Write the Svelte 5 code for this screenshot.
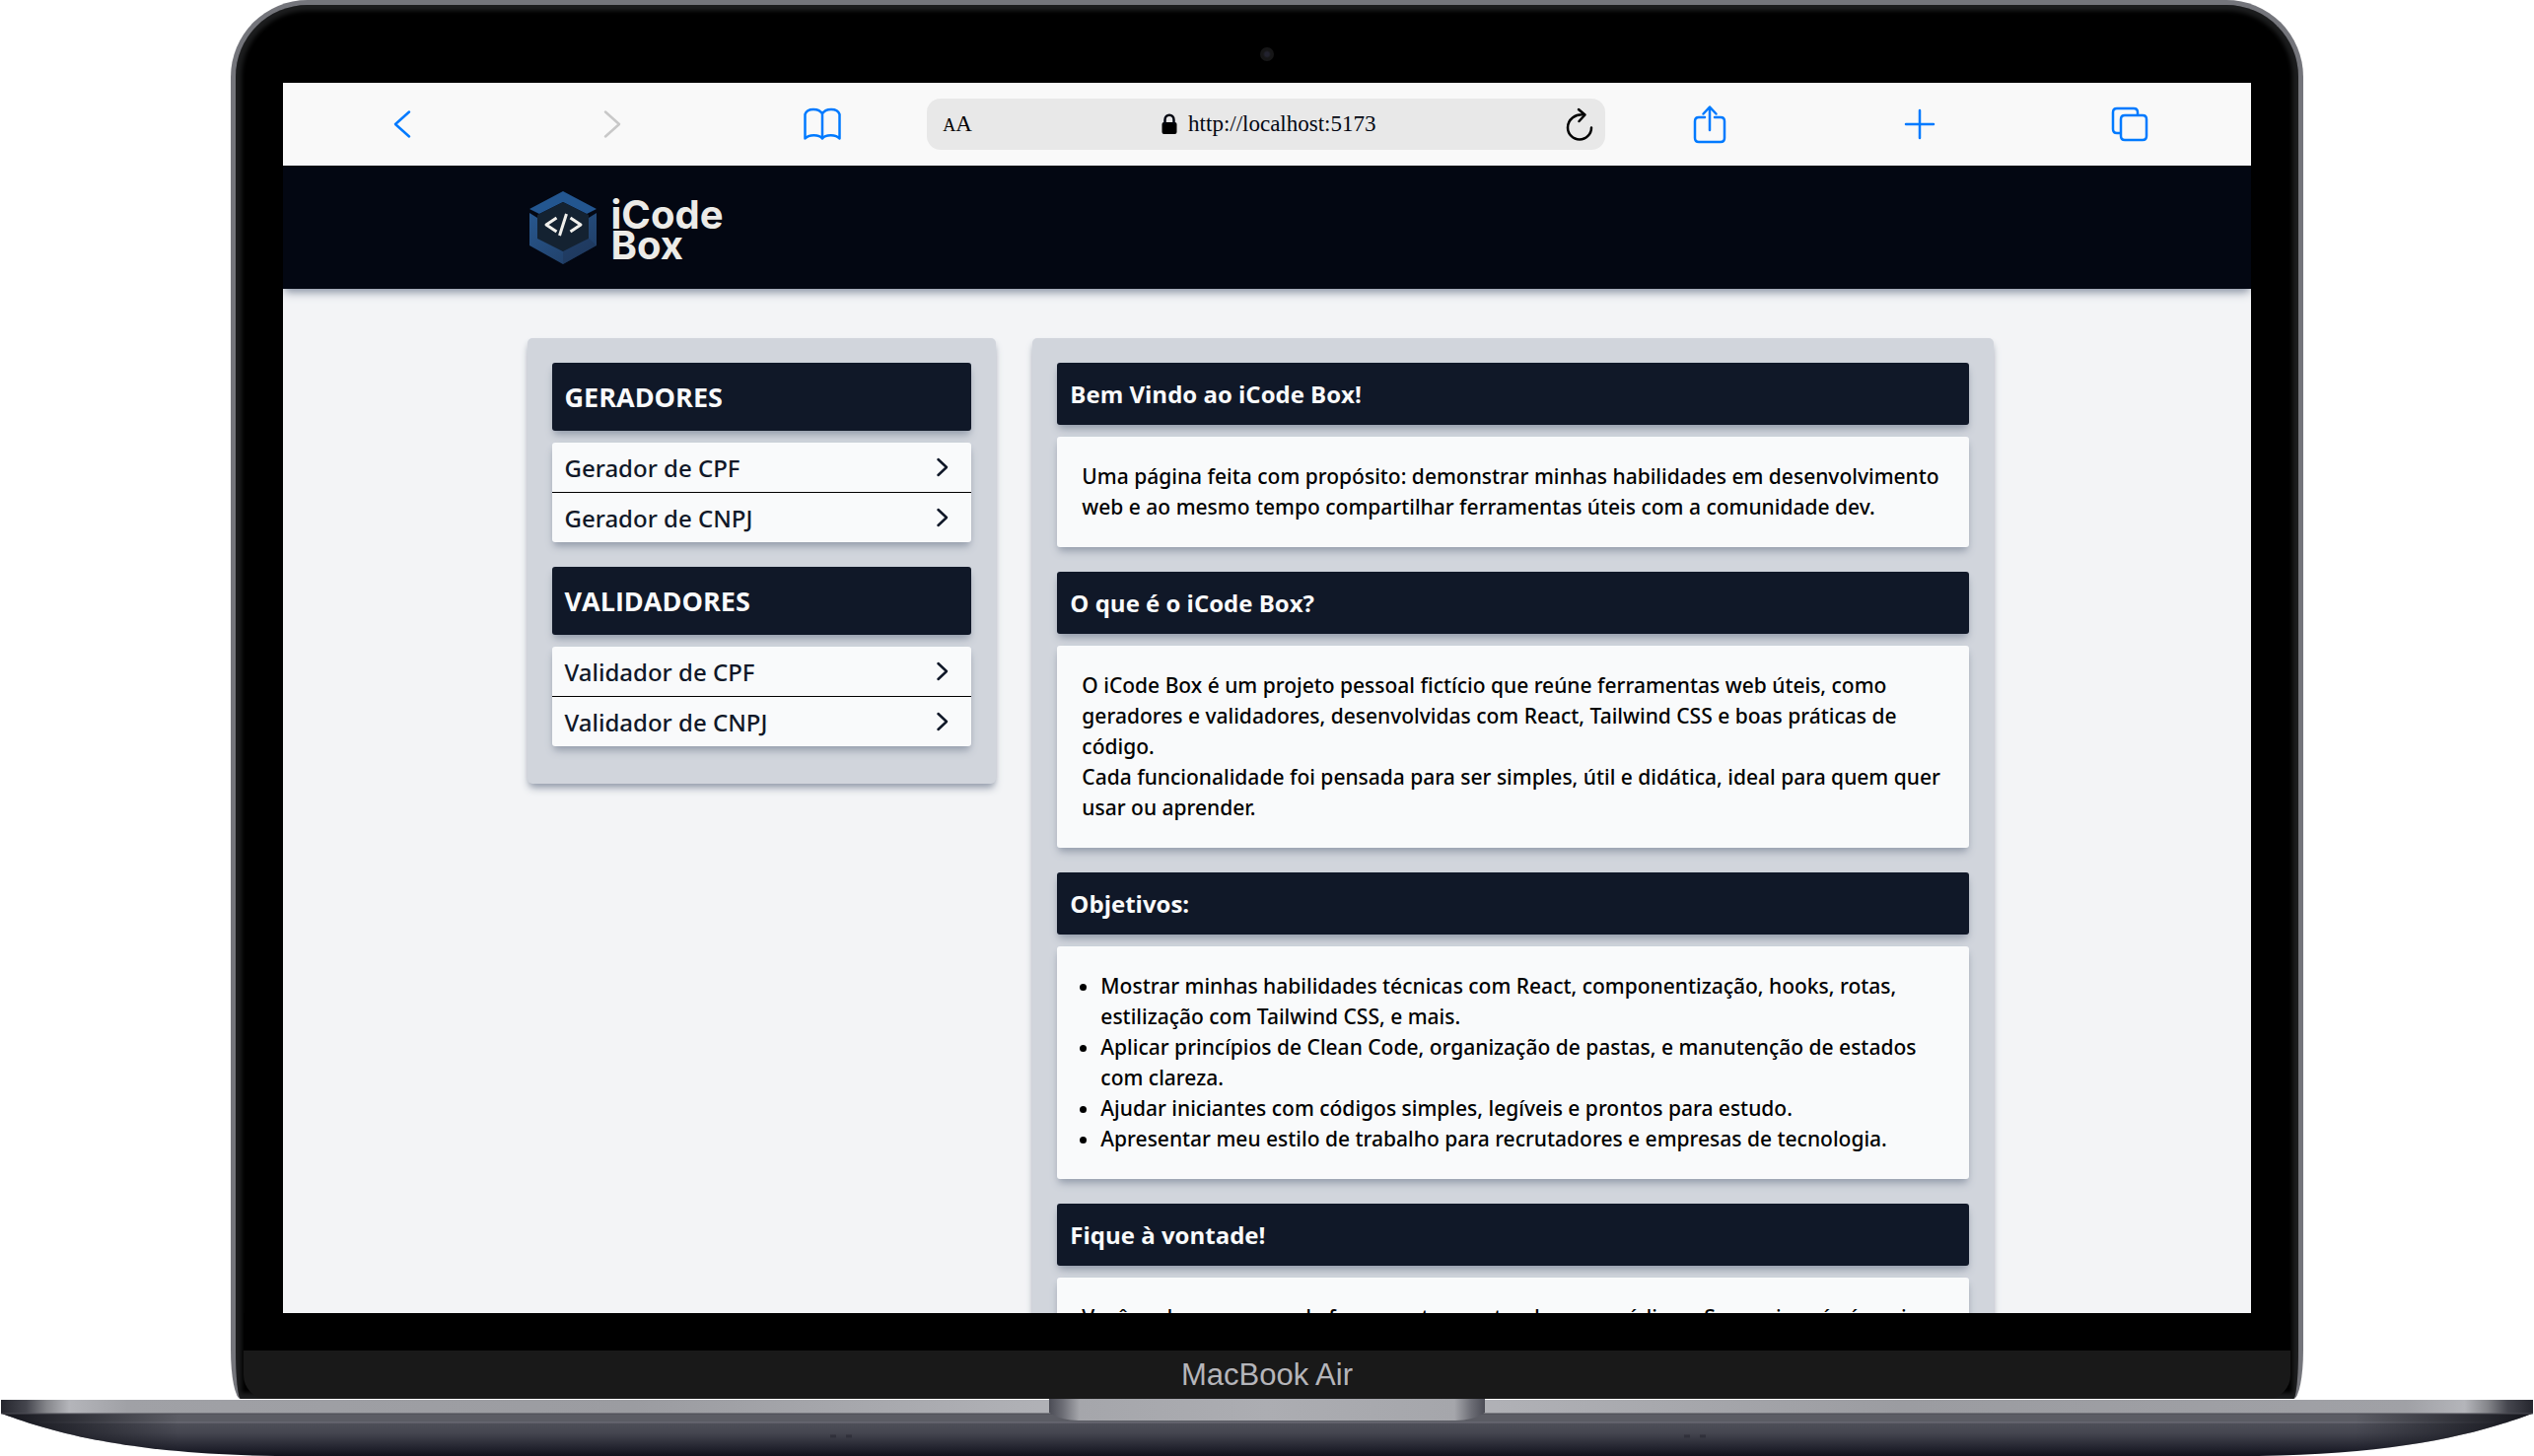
<script>
  const menus = [
    { title: 'GERADORES', links: ['Gerador de CPF', 'Gerador de CNPJ'] },
    { title: 'VALIDADORES', links: ['Validador de CPF', 'Validador de CNPJ'] },
  ];
  const sections = [
    {
      title: 'Bem Vindo ao iCode Box!',
      paragraphs: [
        'Uma página feita com propósito: demonstrar minhas habilidades em desenvolvimento web e ao mesmo tempo compartilhar ferramentas úteis com a comunidade dev.',
      ],
    },
    {
      title: 'O que é o iCode Box?',
      paragraphs: [
        'O iCode Box é um projeto pessoal fictício que reúne ferramentas web úteis, como geradores e validadores, desenvolvidas com React, Tailwind CSS e boas práticas de código.',
        'Cada funcionalidade foi pensada para ser simples, útil e didática, ideal para quem quer usar ou aprender.',
      ],
    },
    {
      title: 'Objetivos:',
      items: [
        'Mostrar minhas habilidades técnicas com React, componentização, hooks, rotas, estilização com Tailwind CSS, e mais.',
        'Aplicar princípios de Clean Code, organização de pastas, e manutenção de estados com clareza.',
        'Ajudar iniciantes com códigos simples, legíveis e prontos para estudo.',
        'Apresentar meu estilo de trabalho para recrutadores e empresas de tecnologia.',
      ],
    },
    {
      title: 'Fique à vontade!',
      paragraphs: [
        'Você pode navegar cada ferramenta, e entender seus códigos. Se precisar, é só copiar ou sugerir melhorias.',
      ],
    },
  ];
</script>

<div class="laptop">
  <div class="lid">
    <div class="camera"><i></i></div>
    <div class="screen">
      <nav class="toolbar" aria-label="Navegador">
        <button aria-label="Voltar"><svg width="20" height="32" viewBox="0 0 20 32"><path d="M17 3.500 3 16l14 12.500" /></svg></button>
        <button class="off" disabled aria-label="Avançar"><svg width="20" height="32" viewBox="0 0 20 32"><path d="M3 3.500 17 16 3 28.500" /></svg></button>
        <button aria-label="Favoritos"><svg width="40" height="36" viewBox="0 0 40 36"><path d="M20 7.500C17 2 5 1 2.500 8V32.500C6 28 17 28 20 32.500C23 28 34 28 37.500 32.500V8C35 1 23 2 20 7.500V32" /></svg></button>
        <div class="address">
          <button class="aa" aria-label="Tamanho do texto"><small>A</small>A</button>
          <div class="url">
            <svg width="16" height="22" viewBox="0 0 16 22"><path class="fill" d="M2.500 9h11q2 0 2 2v8q0 2-2 2h-11q-2 0-2-2v-8q0-2 2-2z" /><path d="M3.500 10V6.500C3.500 0 12.500 0 12.500 6.500V10" /></svg>
            <span>http://localhost:5173</span>
          </div>
          <button class="reload" aria-label="Recarregar"><svg width="28" height="34" viewBox="0 0 28 34"><path d="M19 7.500C10 6 2 12 2 20.500a12 12 0 0 0 24 0M13 2l6.500 5.500L13.500 14" /></svg></button>
        </div>
        <button aria-label="Compartilhar"><svg width="34" height="40" viewBox="0 0 34 40"><path d="M12 13H6q-4 0-4 4v17q0 4 4 4h22q4 0 4-4V17q0-4-4-4h-6M17 26V3M10.500 9.500 17 2.500l6.500 7" /></svg></button>
        <button aria-label="Nova aba"><svg width="32" height="32" viewBox="0 0 32 32"><path d="M2 16h28M16 2v28" /></svg></button>
        <button aria-label="Abas"><svg width="38" height="36" viewBox="0 0 38 36"><path d="M10 27H6q-4 0-4-4V6q0-4 4-4h17q4 0 4 4v3M14 9h18q4 0 4 4v17q0 4-4 4H14q-4 0-4-4V13q0-4 4-4z" /></svg></button>
      </nav>

      <header class="site-header">
        <a class="logo" href="/">
          <svg width="68" height="76" viewBox="0 0 68 76">
            <defs>
              <linearGradient id="hexFill" x1="0" y1="0" x2="1" y2="1"><stop offset="0" stop-color="#28588f" /><stop offset="1" stop-color="#1f3a60" /></linearGradient>
            </defs>
            <path d="M34 1 68 19 58 24 34 12 10 24 0 19z" fill="#235690" />
            <path d="M34 12 60 25V50L34 62 8 50V25z" fill="#142231" />
            <path d="M0 23 8 28V49L34 62 60 49V28L68 23V56L34 75 0 56z" fill="url(#hexFill)" />
            <path d="M34 62 60 49 68 56 34 75z" fill="#1d3455" opacity=".5" />
            <path class="code" d="M27.500 28 17 35l10.500 7M41.500 28 52 35l-10.500 7M37.500 24 30.500 46" />
          </svg>
          <span>iCode<br />Box</span>
        </a>
      </header>

      <div class="content">
        <aside class="panel side">
          {#each menus as menu}
            <section>
              <h2>{menu.title}</h2>
              <ul class="links">
                {#each menu.links as link}
                  <li>
                    <a href="/">{link}<svg width="14" height="22" viewBox="0 0 14 22"><path d="m2.500 3 8.500 8-8.500 8" /></svg></a>
                  </li>
                {/each}
              </ul>
            </section>
          {/each}
        </aside>

        <main class="panel main">
          {#each sections as section}
            <section>
              <h3>{section.title}</h3>
              <div class="card">
                {#if section.items}
                  <ul class="goals">
                    {#each section.items as item}<li>{item}</li>{/each}
                  </ul>
                {:else}
                  {#each section.paragraphs as paragraph}<p>{paragraph}</p>{/each}
                {/if}
              </div>
            </section>
          {/each}
        </main>
      </div>
    </div>
    <div class="chin">MacBook Air</div>
  </div>

  <svg class="base" viewBox="0 0 2570 58" preserveAspectRatio="none" aria-hidden="true">
    <defs>
      <linearGradient id="under" x1="0" y1="0" x2="0" y2="1"><stop offset="0" stop-color="#575861" /><stop offset=".45" stop-color="#454650" /><stop offset=".8" stop-color="#242530" /><stop offset="1" stop-color="#10111c" /></linearGradient>
      <linearGradient id="deck" x1="0" y1="0" x2="1" y2="0"><stop offset="0" stop-color="#25262e" /><stop offset=".01" stop-color="#45464e" /><stop offset=".018" stop-color="#85868b" /><stop offset=".027" stop-color="#b4b5ba" /><stop offset=".05" stop-color="#a0a1a6" /><stop offset=".25" stop-color="#9b9ca1" /><stop offset=".41" stop-color="#b0b1b6" /><stop offset=".59" stop-color="#b0b1b6" /><stop offset=".75" stop-color="#9b9ca1" /><stop offset=".95" stop-color="#a0a1a6" /><stop offset=".973" stop-color="#b4b5ba" /><stop offset=".982" stop-color="#85868b" /><stop offset=".99" stop-color="#45464e" /><stop offset="1" stop-color="#25262e" /></linearGradient>
      <linearGradient id="edge" x1="0" y1="0" x2="1" y2="0"><stop offset="0" stop-color="#14151c" /><stop offset=".07" stop-color="#14151c" stop-opacity="0" /><stop offset=".93" stop-color="#14151c" stop-opacity="0" /><stop offset="1" stop-color="#14151c" /></linearGradient>
      <linearGradient id="notch" x1="0" y1="0" x2="1" y2="0"><stop offset="0" stop-color="#4b4c55" /><stop offset=".03" stop-color="#6b6c74" /><stop offset=".07" stop-color="#a5a6ab" /><stop offset=".5" stop-color="#acadb2" /><stop offset=".93" stop-color="#a5a6ab" /><stop offset=".97" stop-color="#6b6c74" /><stop offset="1" stop-color="#4b4c55" /></linearGradient>
    </defs>
    <path d="M2 15H2568C2510 37 2430 56 2290 58H280C140 56 60 37 2 15z" fill="url(#under)" />
    <path d="M2 15H2568L2530 24H40z" fill="#5b5c64" />
    <path d="M40 24H2530" stroke="#70717a" />
    <path d="M2 15H2568C2510 37 2430 56 2290 58H280C140 56 60 37 2 15z" fill="url(#edge)" />
    <path d="M1 1H2569V15H1z" fill="url(#deck)" />
    <path d="M1 15H2569" stroke="#4c4d55" />
    <path d="M1064 0H1506V14Q1494 22 1476 22H1094Q1076 22 1064 14z" fill="url(#notch)" />
    <path d="M842 38h6m10 0h6M1708 38h6m10 0h6" stroke="#30313b" stroke-width="3" />
  </svg>
</div>

<style>
  :global(body) {
    margin: 0;
    background: #fff;
  }

  .laptop {
    overflow: hidden;
  }
  .laptop * {
    box-sizing: border-box;
  }
  .lid {
    width: 81.8%;
    margin: 0 auto;
    display: flex;
    flex-direction: column;
    align-items: center;
    background: #000;
    border: 5px solid #74757b;
    border-bottom: 0;
    border-radius: 78px;
    border-bottom-left-radius: 10px 50px;
    border-bottom-right-radius: 10px 50px;
    box-shadow: inset 0 0 4px 6px #1c1d1e;
    overflow: hidden;
  }
  .camera {
    height: 79px;
    display: flex;
    align-items: center;
    padding-top: 20px;
  }
  .camera i {
    width: 14px;
    height: 14px;
    border-radius: 50%;
    background: radial-gradient(#22222e 0 2px, #161617 4px);
  }
  .screen {
    width: 95.4%;
    aspect-ratio: 16 / 10;
    overflow: hidden;
    background: #f3f4f6;
    font-family: 'Open Sans', 'Noto Sans', sans-serif;
    color: #030712;
  }
  .toolbar {
    display: grid;
    grid-template-columns: repeat(3, 1fr) 35% repeat(3, 1fr);
    align-items: center;
    height: 84px;
    padding: 0 17px 0 15px;
    background: #f9f9f9;
  }
  button {
    display: flex;
    align-items: center;
    justify-content: center;
    padding: 0;
    border: 0;
    background: none;
    color: #007aff;
  }
  svg path {
    stroke-linejoin: round;
  }
  button svg,
  .url svg,
  .links svg {
    fill: none;
    stroke: currentColor;
    stroke-width: 2.5;
    stroke-linecap: round;
  }
  .off {
    color: #c8c8c8;
  }
  .address {
    display: flex;
    align-items: center;
    justify-content: space-between;
    height: 52px;
    padding: 0 12px 0 16px;
    border-radius: 14px;
    background: #e8e8e8;
    font: 23px 'Liberation Serif', serif;
  }
  .address button {
    color: #000;
    font: inherit;
  }
  .address .aa {
    align-items: baseline;
  }
  .aa small {
    font-size: 18px;
  }
  .url {
    display: flex;
    align-items: center;
    gap: 11px;
  }
  .url .fill {
    fill: #000;
    stroke: none;
  }
  .site-header {
    display: flex;
    align-items: center;
    height: 125px;
    padding: 0 12.5%;
    background: #030712;
    box-shadow: 0 6px 9px -2px #99a1af, 0 3px 6px -3px #99a1af;
  }
  .logo {
    display: flex;
    align-items: center;
    gap: 15px;
    color: #ecebe7;
    font: 700 40px/31px Inter, sans-serif;
    text-decoration: none;
  }
  .logo span {
    padding-top: 4px;
  }
  .logo .code {
    fill: none;
    stroke: #f0efeb;
    stroke-width: 3;
  }
  .content {
    display: grid;
    grid-template-columns: 32% 1fr;
    gap: 37px;
    align-items: start;
    padding: 50px 13.1% 50px 12.4%;
  }
  .panel {
    display: flex;
    flex-direction: column;
    gap: 25px;
    padding: 25px;
    border-radius: 5px;
    background: #d1d5dc;
  }
  .panel,
  h2,
  h3,
  .card,
  .links {
    box-shadow: 0 6px 9px -2px #99a1af, 0 3px 6px -3px #99a1af;
  }
  .side {
    padding-bottom: 38px;
  }
  section {
    display: flex;
    flex-direction: column;
    gap: 12px;
  }
  h2,
  h3,
  p,
  ul {
    margin: 0;
    padding: 0;
  }
  h2,
  h3 {
    padding: 0 13px;
    border-radius: 3px;
    background: #101828;
    color: #f9fafb;
    font-weight: 700;
  }
  h2 {
    font-size: 27px;
    line-height: 69px;
  }
  h3 {
    font-size: 24px;
    line-height: 63px;
  }
  .links,
  .card {
    border-radius: 3px;
    background: #f9fafb;
    font-family: 'Noto Sans', 'Open Sans', sans-serif;
    font-weight: 500;
  }
  .links {
    list-style: none;
  }
  .links li + li {
    border-top: 1px solid #000;
  }
  .links a {
    display: flex;
    align-items: center;
    justify-content: space-between;
    height: 50px;
    padding: 0 22px 0 13px;
    color: #101828;
    font-size: 24px;
    text-decoration: none;
  }
  .card {
    padding: 25px 24px 25px 25px;
    color: #000;
    font-size: 21px;
    line-height: 31px;
  }
  .goals {
    padding-left: 19px;
  }
  .chin {
    width: calc(100% - 16px);
    height: 87px;
    padding-top: 38px;
    border-radius: 0 0 24px 24px;
    background: #191919 linear-gradient(#000, #000) top / 100% 38px no-repeat;
    color: #b5b5ba;
    font: 31px/50px 'Liberation Sans', sans-serif;
    text-align: center;
  }
  .base {
    display: block;
    width: 100%;
    height: 58px;
  }
</style>
